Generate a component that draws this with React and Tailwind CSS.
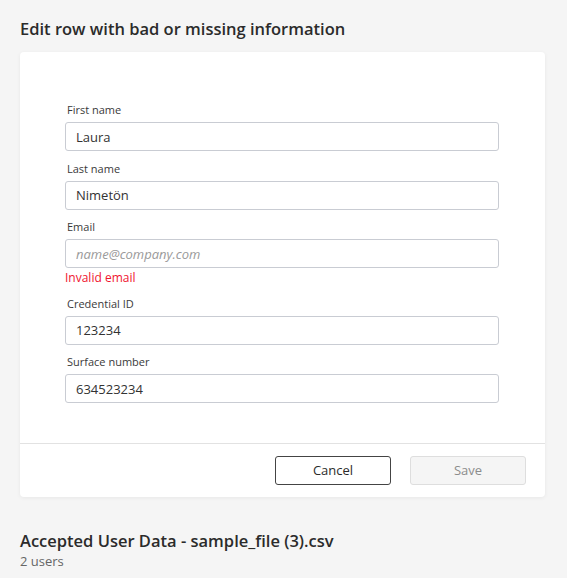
import React from 'react';

const fields = [
  { label: 'First name', value: 'Laura' },
  { label: 'Last name', value: 'Nimetön' },
  { label: 'Email', value: '', placeholder: 'name@company.com', error: 'Invalid email' },
  { label: 'Credential ID', value: '123234' },
  { label: 'Surface number', value: '634523234' },
];

function Field({ label, value, placeholder, error }) {
  return (
    <div className="mb-[9.5px]">
      <label className="block text-[11px] leading-[16px] text-[#3a3a3a] pl-[2px] mb-[4px]">{label}</label>
      <input
        type="text"
        defaultValue={value}
        placeholder={placeholder}
        className="block w-full h-[29px] px-[10px] border border-[#c9ccd3] rounded-[3px] bg-white text-[13px] text-[#333] placeholder:italic placeholder:text-[#9a9a9a] focus:outline-none"
      />
      {error && <p className="mt-[2px] text-[12px] leading-[16px] text-[#f0142f]">{error}</p>}
    </div>
  );
}

export default function App() {
  return (
    <div className="min-h-screen bg-[#f5f5f5] pl-[20px] pr-[22px] pt-[17px] pb-4 font-['Open_Sans',sans-serif]">
      <h2 className="text-[16.5px] leading-[24px] font-semibold text-[#2b2b2b] mb-[11px]">
        Edit row with bad or missing information
      </h2>

      <div className="bg-white rounded-[4px] shadow-[0_1px_4px_rgba(0,0,0,0.06)]">
        <div className="pt-[50px] pb-[30.5px] pl-[45px] pr-[46px]">
          {fields.map((f) => (
            <Field key={f.label} {...f} />
          ))}
        </div>
        <div className="border-t border-[#e2e2e2] flex justify-end gap-[19px] pt-[12px] pb-[12px] pr-[19px]">
          <button className="w-[116px] h-[29px] border border-[#444] rounded-[3px] bg-white text-[13px] text-[#2b2b2b]">
            Cancel
          </button>
          <button
            disabled
            className="w-[116px] h-[29px] border border-[#dedede] rounded-[3px] bg-[#f5f5f5] text-[13px] text-[#8c8c8c]"
          >
            Save
          </button>
        </div>
      </div>

      <div className="mt-[33px]">
        <h3 className="text-[16.5px] leading-[22px] font-semibold text-[#2b2b2b]">
          Accepted User Data - sample_file (3).csv
        </h3>
        <p className="text-[13px] leading-[18px] text-[#666]">2 users</p>
      </div>
    </div>
  );
}
